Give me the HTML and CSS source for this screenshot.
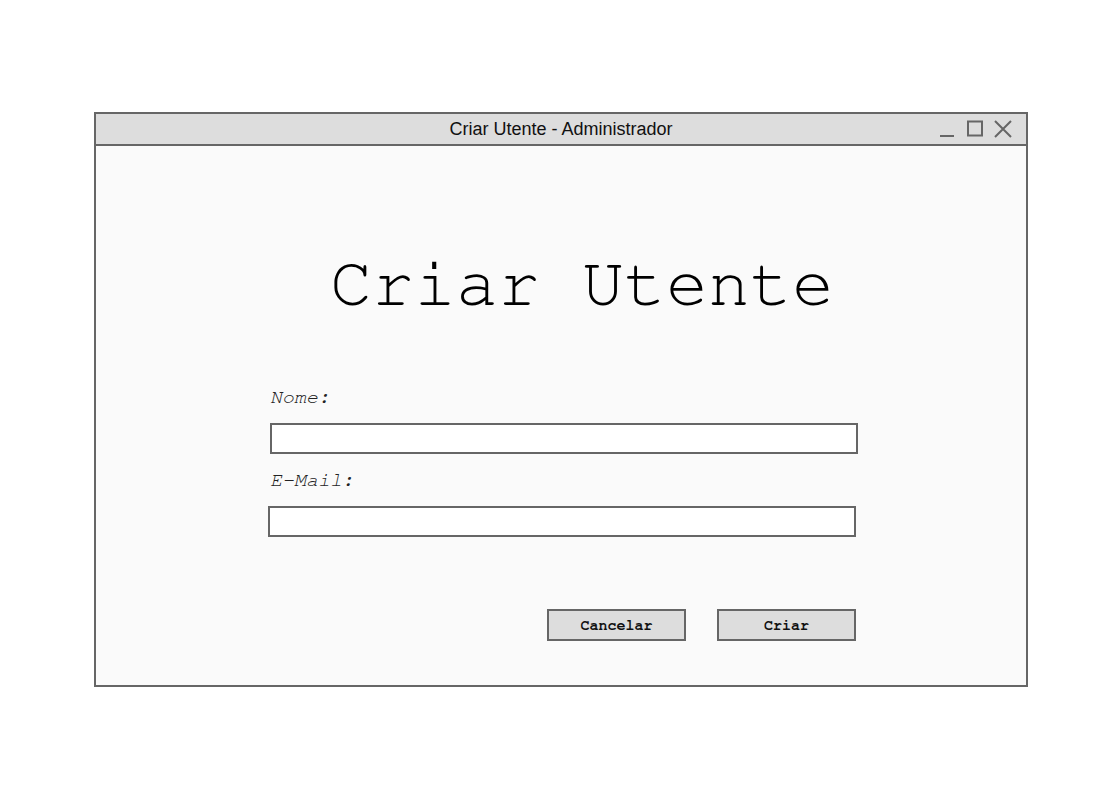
FILE: index.html
```html
<!DOCTYPE html>
<html lang="pt">
<head>
<meta charset="utf-8">
<title>Criar Utente - Administrador</title>
<link rel="stylesheet" href="styles.css">
</head>
<body>
<div class="window">
  <div class="titlebar">
    <span class="title">Criar Utente - Administrador</span>
    <div class="controls">
      <svg class="ctl" width="16" height="18" viewBox="0 0 16 18"><path d="M0 16H14" stroke="#666" stroke-width="2" fill="none"/></svg>
      <svg class="ctl" width="16" height="18" viewBox="0 0 16 18"><rect x="1" y="1.5" width="14" height="14" stroke="#666" stroke-width="2" fill="none"/></svg>
      <svg class="ctl" width="18" height="18" viewBox="0 0 18 18"><path d="M1 1L17 17M17 1L1 17" stroke="#666" stroke-width="2" fill="none"/></svg>
    </div>
  </div>
  <div class="content">
    <h1 class="heading">Criar Utente</h1>
    <div class="form">
      <label class="label">Nome:</label>
      <div class="input"></div>
      <label class="label label-2">E-Mail:</label>
      <div class="input input-2"></div>
      <div class="buttons">
        <button class="btn">Cancelar</button>
        <button class="btn">Criar</button>
      </div>
    </div>
  </div>
</div>
</body>
</html>
```

FILE: styles.css
```css
html, body {
  margin: 0;
  padding: 0;
  background: #ffffff;
}
body {
  padding: 112px 0 0 94px;
}
.window {
  width: 934px;
  height: 575px;
  box-sizing: border-box;
  border: 2px solid #666666;
  background: #fafafa;
  display: flex;
  flex-direction: column;
}
.titlebar {
  height: 30px;
  border-bottom: 2px solid #666666;
  background: #dddddd;
  position: relative;
  display: flex;
  align-items: center;
  justify-content: center;
}
.title {
  font-family: "Liberation Sans", Arial, sans-serif;
  font-size: 18px;
  color: #111111;
}
.controls {
  position: absolute;
  right: 14px;
  top: 6px;
  display: flex;
  gap: 11px;
}
.ctl {
  display: block;
}
.content {
  flex: 1;
  display: flex;
  flex-direction: column;
}
.heading {
  margin: 98px 0 0 0;
  text-align: center;
  font-family: "Nimbus Mono PS", "Nimbus Mono L", "FreeMono", "Courier", "Liberation Mono", monospace;
  font-weight: normal;
  font-size: 70px;
  line-height: 80px;
  color: #000000;
  padding-left: 42px;
}
.form {
  margin: 61px 0 0 174px;
  width: 588px;
  display: flex;
  flex-direction: column;
}
.label {
  font-family: "Nimbus Mono PS", "Nimbus Mono L", "FreeMono", "Courier", "Liberation Mono", monospace;
  font-style: italic;
  font-size: 20px;
  line-height: 24px;
  color: #222222;
}
.input {
  margin-top: 14px;
  width: 588px;
  height: 31px;
  box-sizing: border-box;
  border: 2px solid #666666;
  background: #ffffff;
}
.label-2 {
  margin-top: 14px;
}
.input-2 {
  margin-left: -2px;
}
.buttons {
  margin-top: 72px;
  display: flex;
  justify-content: flex-end;
  gap: 31px;
  margin-right: 2px;
}
.btn {
  width: 139px;
  height: 32px;
  box-sizing: border-box;
  border: 2px solid #666666;
  background: #dddddd;
  font-family: "Nimbus Mono PS", "Nimbus Mono L", "FreeMono", "Courier", "Liberation Mono", monospace;
  font-weight: bold;
  font-size: 15px;
  color: #111111;
  padding: 0;
}
```
